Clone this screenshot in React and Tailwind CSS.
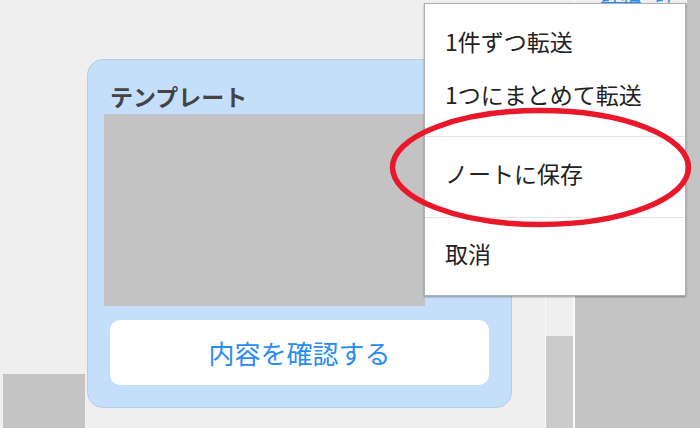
const MENU = [
  { id: "each", label: "1件ずつ転送" },
  { id: "merge", label: "1つにまとめて転送" },
];

export default function App() {
  return (
    <div
      className="relative h-[428px] w-[700px] overflow-hidden bg-[#efefef]"
      style={{ fontFamily: '"Noto Sans CJK JP", "Noto Sans", sans-serif' }}
    >
      <div className="flex h-full">
        {/* left strip */}
        <div className="flex w-[87px] flex-col justify-end pl-[3px] pr-[2px]">
          <div className="h-[54px] bg-[#c4c4c4]" />
        </div>

        {/* template card */}
        <div className="pt-[59px]">
          <div className="flex h-[349px] w-[425px] flex-col rounded-[16px] border border-[#b4cde8] bg-[#c5dffb]">
            <div className="h-[54px] pl-[22px] pt-[22px] text-[23px] font-bold leading-[28px] text-[#444]">
              テンプレート
            </div>
            <div className="ml-[16px] h-[192px] w-[321px] bg-[#c3c3c3]" />
            <div className="ml-[22px] mt-[14px] flex h-[65px] w-[379px] items-center justify-center rounded-[10px] bg-white text-[26px] leading-none text-[#2a8cf0]">
              内容を確認する
            </div>
          </div>
        </div>

        <div className="w-[33px]" />
        <div className="w-[1px] bg-[#f9f9f9]" />
        <div className="flex w-[27px] flex-col justify-end">
          <div className="h-[92px] bg-[#cbcbcb]" />
        </div>
        <div className="w-[2px] bg-[#f9f9f9]" />

        {/* right column */}
        <div className="flex-1 bg-[#c4c4c4]">
          <div className="h-[20px] w-[112px] bg-[#efefef]">
            <div className="-mt-[17px] flex gap-[14px] pl-[26px] text-[20px] leading-none text-[#2a8cf0]">
              <span className="underline">詳細</span>
              <span>詳</span>
            </div>
          </div>
        </div>
      </div>

      {/* context menu */}
      <div className="absolute left-[424px] top-[3px] w-[262px] border border-[#b0b0b0] bg-white text-[23px] leading-none text-[#222] shadow-[0_1px_2px_rgba(0,0,0,0.35)]">
        <div className="pb-[12px] pt-[14px]">
          {MENU.map((m) => (
            <div key={m.id} className="flex h-[53px] items-center pb-[6px] pl-[20px]">
              {m.label}
            </div>
          ))}
        </div>
        <div className="h-[1px] bg-[#e4e4e4]" />
        <div className="flex h-[80px] items-center pb-[8px] pl-[20px]">ノートに保存</div>
        <div className="h-[1px] bg-[#e4e4e4]" />
        <div className="flex h-[77px] items-center pb-[6px] pl-[20px]">取消</div>
      </div>

      {/* red marker */}
      <svg className="absolute left-[385px] top-[103px]" width="312" height="130">
        <ellipse cx="155.5" cy="64.5" rx="148" ry="57" fill="none" stroke="#e8182a" strokeWidth="5.5" />
      </svg>
    </div>
  );
}
